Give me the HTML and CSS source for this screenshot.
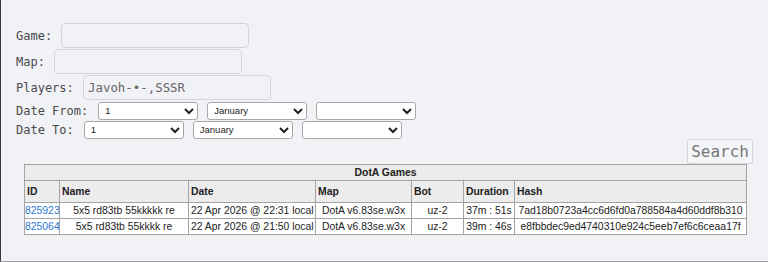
FILE: index.html
```html
<!DOCTYPE html>
<html lang="en">
<head>
    <meta charset="UTF-8">
    <title>DotA Games</title>
    <link rel="stylesheet" href="styles.css">
</head>
<body>
    <div class="page">
        <form class="search-form">
            <div class="field">Game: <input type="text" class="text-input"></div>
            <div class="field">Map: <input type="text" class="text-input"></div>
            <div class="field">Players: <input type="text" class="text-input" value="Javoh-•-,SSSR"></div>
            <div class="date-row">
                <span>Date From:</span>
                <select class="date-select"><option>1</option></select>
                <select class="date-select"><option>January</option></select>
                <select class="date-select"><option></option></select>
            </div>
            <div class="date-row">
                <span>Date To:</span>
                <select class="date-select"><option>1</option></select>
                <select class="date-select"><option>January</option></select>
                <select class="date-select"><option></option></select>
            </div>
            <div class="actions">
                <button type="button" class="search-button">Search</button>
            </div>
        </form>

        <table class="games">
            <colgroup>
                <col style="width: 35px">
                <col style="width: 129px">
                <col style="width: 127px">
                <col style="width: 96px">
                <col style="width: 52px">
                <col style="width: 51px">
                <col style="width: 232px">
            </colgroup>
            <tr>
                <th colspan="7" class="caption">DotA Games</th>
            </tr>
            <tr>
                <th>ID</th>
                <th>Name</th>
                <th>Date</th>
                <th>Map</th>
                <th>Bot</th>
                <th>Duration</th>
                <th>Hash</th>
            </tr>
            <tr>
                <td class="id"><a href="#">825923</a></td>
                <td>5x5 rd83tb 55kkkkk re</td>
                <td>22 Apr 2026 @ 22:31 local</td>
                <td>DotA v6.83se.w3x</td>
                <td>uz-2</td>
                <td>37m : 51s</td>
                <td>7ad18b0723a4cc6d6fd0a788584a4d60ddf8b310</td>
            </tr>
            <tr>
                <td class="id"><a href="#">825064</a></td>
                <td>5x5 rd83tb 55kkkk re</td>
                <td>22 Apr 2026 @ 21:50 local</td>
                <td>DotA v6.83se.w3x</td>
                <td>uz-2</td>
                <td>39m : 46s</td>
                <td>e8fbbdec9ed4740310e924c5eeb7ef6c6ceaa17f</td>
            </tr>
        </table>
    </div>
</body>
</html>
```

FILE: styles.css
```css
:root {
    --bg-color: #f1f2f6;
    --text-color: #4a4a4a;
    --input-border: #d4d5da;
    --select-border: #a8a8a8;
    --table-border: #a3a3a3;
    --head-bg: #ececec;
    --link-color: #2b78d4;
}

html, body {
    margin: 0;
    padding: 0;
}

body {
    background-color: var(--bg-color);
    color: var(--text-color);
    font-family: "DejaVu Sans Mono", monospace;
    font-size: 12px;
    border-left: 1px solid #3a3a3a;
    border-bottom: 1px solid #a0a0a8;
    height: 262px;
    box-sizing: border-box;
    overflow: hidden;
}

.page {
    padding: 23px 15px 0 15px;
}

.field {
    line-height: 16px;
}

.text-input {
    width: 188px;
    height: 25px;
    margin: 0 2px 1px 2px;
    padding: 0 4px;
    box-sizing: border-box;
    border: 1px solid var(--input-border);
    border-radius: 4px;
    background-color: var(--bg-color);
    color: #666;
    font-family: "DejaVu Sans Mono", monospace;
    font-size: 12.4px;
    vertical-align: middle;
}

.date-row {
    display: flex;
    align-items: center;
    gap: 9px;
    height: 19px;
}

.date-row span {
    margin-right: 1px;
}

.date-select {
    width: 100px;
    height: 18px;
    margin: 0;
    padding: 0 2px;
    box-sizing: border-box;
    border: 1px solid var(--select-border);
    border-radius: 3px;
    background-color: #ffffff;
    color: #222;
    font-family: "Liberation Sans", Arial, sans-serif;
    font-size: 9.5px;
}

.actions {
    display: flex;
    justify-content: flex-end;
}

.search-button {
    margin: 0;
    padding: 0 3px;
    height: 25px;
    border: 1px solid #d6d7db;
    border-radius: 2px;
    background-color: #f4f5f8;
    color: #777;
    font-family: "DejaVu Sans Mono", monospace;
    font-size: 16px;
}

.games {
    margin-left: 8px;
    width: 722px;
    border-collapse: collapse;
    table-layout: fixed;
    font-family: "Liberation Sans", Arial, sans-serif;
    font-size: 10.4px;
    color: #222;
    border: 1px solid var(--table-border);
}

.games th,
.games td {
    border: 1px solid var(--table-border);
    padding: 0 2px;
    white-space: nowrap;
    overflow: hidden;
}

.games th {
    background-color: var(--head-bg);
    text-align: left;
    height: 21px;
    font-weight: bold;
}

.games th.caption {
    height: 15px;
    text-align: center;
}

.games td {
    background-color: #ffffff;
    height: 15px;
    text-align: center;
}

.games td.id {
    text-align: left;
    padding: 0;
}

.games a {
    color: var(--link-color);
    text-decoration: none;
}
```
